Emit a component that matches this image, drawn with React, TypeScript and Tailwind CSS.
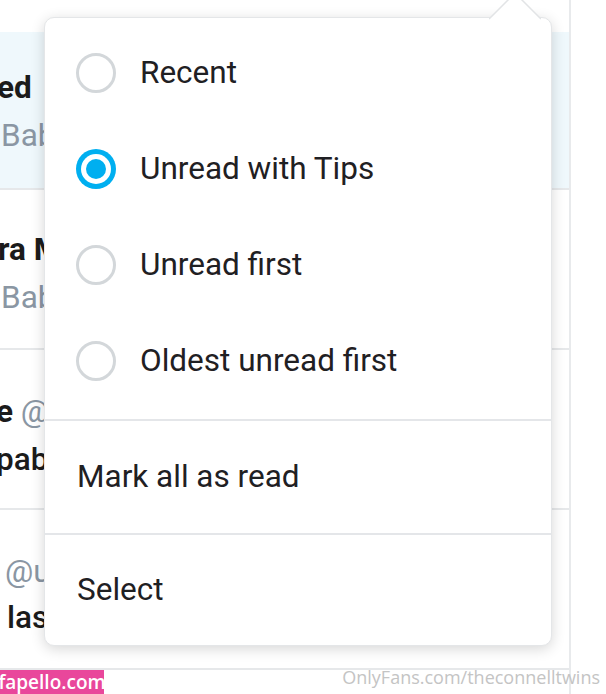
import { useState } from 'react';

const sortOptions = ['Recent', 'Unread with Tips', 'Unread first', 'Oldest unread first'];

function Radio({ checked }: { checked: boolean }) {
  if (checked) {
    return (
      <span className="w-10 h-10 rounded-full bg-[#00aff0] flex items-center justify-center shrink-0">
        <span className="w-[30px] h-[30px] rounded-full bg-white flex items-center justify-center">
          <span className="w-[20px] h-[20px] rounded-full bg-[#00aff0]" />
        </span>
      </span>
    );
  }
  return <span className="w-10 h-10 rounded-full border-[3px] border-[#d3d7da] shrink-0" />;
}

export default function App() {
  const [sort, setSort] = useState(1);

  return (
    <div className="relative w-[606px] h-[694px] overflow-hidden bg-white font-['Roboto',sans-serif] text-[31.5px]">
      {/* chat list behind the menu */}
      <div className="w-[571px] h-full border-r-2 border-[#e8eaec] pt-[32px] flex flex-col">
        <div className="h-[158px] bg-[#eff8fc] border-b-2 border-[#e6e8ea] pt-[38px] flex flex-col gap-[12px] leading-[36px] whitespace-nowrap">
          <p className="font-bold text-[#1b1b1b] -ml-[3px]">ed</p>
          <p className="text-[#8a96a3] ml-[1px]">Babe you there?</p>
        </div>
        <div className="h-[160px] border-b-2 border-[#e6e8ea] pt-[42px] flex flex-col gap-[12px] leading-[36px] whitespace-nowrap">
          <p className="font-bold text-[#1b1b1b] -ml-[2px]">ra Mae</p>
          <p className="text-[#8a96a3] ml-[1px]">Babe you there?</p>
        </div>
        <div className="h-[160px] border-b-2 border-[#e6e8ea] pt-[44px] flex flex-col gap-[12px] leading-[36px] whitespace-nowrap">
          <p className="-ml-[4px]"><span className="font-bold text-[#1b1b1b]">e</span> <span className="text-[#8a96a3]">@user</span></p>
          <p className="font-medium text-[#1b1b1b] -ml-[4px]">pabe hey</p>
        </div>
        <div className="h-[160px] border-b-2 border-[#e6e8ea] pt-[44px] flex flex-col gap-[10px] leading-[36px] whitespace-nowrap">
          <p className="text-[#8a96a3] ml-[5px]">@user</p>
          <p className="font-medium text-[#1b1b1b] ml-[7px]">last one</p>
        </div>
      </div>

      {/* sort menu */}
      <div className="absolute left-[44px] top-[17px] w-[508px] h-[629px] bg-white rounded-[10px] border border-[#e4e6e8] shadow-[0_3px_14px_rgba(0,0,0,0.16)] flex flex-col">
        <svg className="absolute left-[444px] -top-[26px]" width="52" height="28" viewBox="0 0 52 28">
          <path d="M0 27 L26 1 L52 27" fill="white" stroke="#e2e4e6" strokeWidth="1.5" />
        </svg>
        <div className="pt-[7px] pb-[10px] flex flex-col">
          {sortOptions.map((label, i) => (
            <button
              key={label}
              onClick={() => setSort(i)}
              className="h-[96px] pl-[31px] flex items-center gap-[24px] text-left text-[#1f2023]"
            >
              <Radio checked={sort === i} />
              <span>{label}</span>
            </button>
          ))}
        </div>
        <div className="h-[2px] bg-[#e4e6e9]" />
        <button className="h-[112px] px-8 flex items-center text-left text-[#1f2023]">Mark all as read</button>
        <div className="h-[2px] bg-[#e4e6e9]" />
        <button className="flex-1 px-8 flex items-center text-left text-[#1f2023]">Select</button>
      </div>

      {/* watermarks */}
      <div className="absolute left-0 bottom-0 h-[24px] w-[104px] bg-[#e9479b] flex items-center justify-center">
        <span className="font-['Open_Sans',sans-serif] font-semibold text-white text-[19px] leading-none">fapello.com</span>
      </div>
      <span className="absolute right-[6px] bottom-[8px] font-['Open_Sans',sans-serif] text-[#c4c4c4] text-[18px] leading-none">OnlyFans.com/theconnelltwins</span>
    </div>
  );
}
